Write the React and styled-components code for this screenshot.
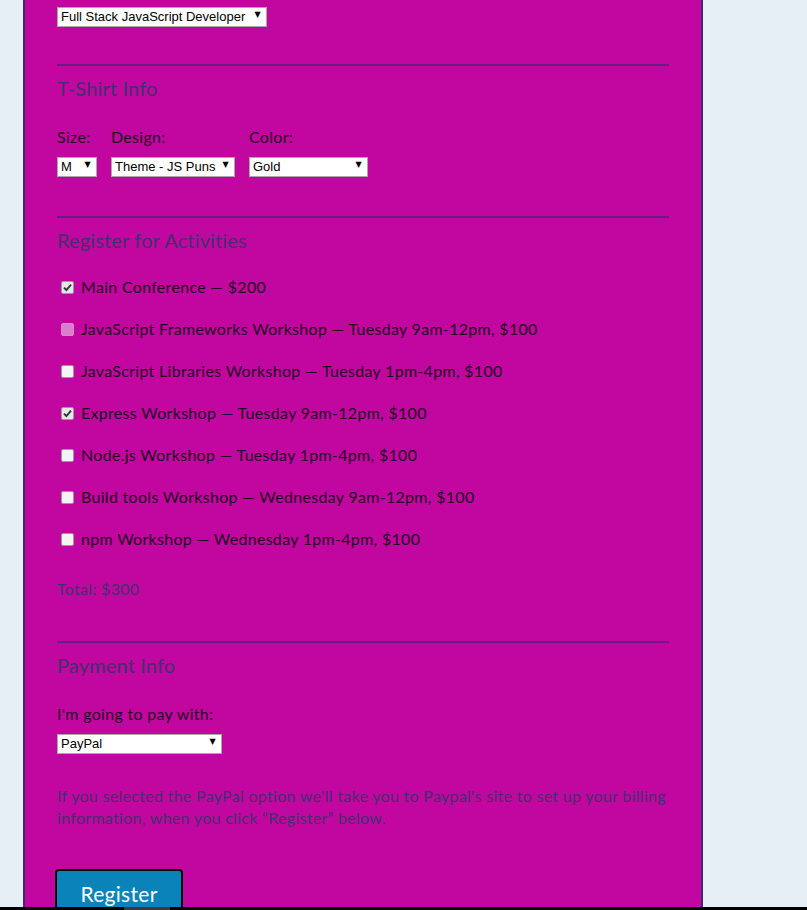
import styled, { createGlobalStyle } from "styled-components";

const GlobalStyle = createGlobalStyle`
    html, body {
        margin: 0;
        padding: 0;
        background: #e6eef6;
        overflow: hidden;
    }
    body {
        font-family: Lato, "Open Sans", sans-serif;
        letter-spacing: 0.3px;
    }
`;

const Panel = styled.form`
    margin-left: 23px;
    width: 612px;
    height: 906px;
    overflow: hidden;
    padding: 5px 32px 0;
    box-sizing: content-box;
    background: #c207a0;
    border-left: 2px solid #3b2a70;
    border-right: 2px solid #3b2a70;
`;

const Rule = styled.hr`
    border: none;
    height: 2px;
    background: #6a1c82;
    margin: ${p => p.$top || 39}px 0 10px;
`;

const Heading = styled.h2`
    margin: 0;
    font-size: 20px;
    line-height: 24px;
    font-weight: 400;
    letter-spacing: 0.15px;
    color: #41306e;
`;

const Label = styled.label`
    display: block;
    font-size: 16px;
    line-height: 20px;
    color: #25061f;
    margin: ${p => p.$top || 0}px 0 8px;
`;

const SelectWrap = styled.div`
    position: relative;
    width: ${p => p.$w}px;
    height: 20px;
`;

const Select = styled.select`
    appearance: none;
    -webkit-appearance: none;
    width: 100%;
    height: 20px;
    box-sizing: border-box;
    margin: 0;
    padding: 0 14px 0 3px;
    border: 1px solid #a9a9a9;
    border-radius: 0;
    background: #fff;
    color: #000;
    font-family: "Liberation Sans", Arial, sans-serif;
    font-size: 13px;
    letter-spacing: 0;
    outline: none;
`;

const Arrow = styled.span`
    position: absolute;
    right: 6px;
    top: 5px;
    font-size: 8px;
    line-height: 10px;
    color: #000;
    font-family: "DejaVu Sans", sans-serif;
    pointer-events: none;
`;

const ShirtRow = styled.div`
    display: flex;
    gap: 14px;
    margin-top: 27px;
`;

const Column = styled.div`
    display: flex;
    flex-direction: column;
`;

const Activities = styled.div`
    display: flex;
    flex-direction: column;
    gap: 22px;
    margin-top: 25px;
`;

const Activity = styled.label`
    display: flex;
    align-items: center;
    font-size: 16px;
    line-height: 20px;
    color: #220020;
`;

const Box = styled.span`
    width: 13px;
    height: 13px;
    box-sizing: border-box;
    margin: 0 7px 0 4px;
    border-radius: 2px;
    border: 1px solid ${p => (p.$disabled ? "#d58bcb" : "#9a9a9a")};
    background: ${p => (p.$disabled ? "#da7fce" : p.$checked ? "#e6e6e6" : "#f4f4f4")};
    display: inline-flex;
    align-items: center;
    justify-content: center;
`;

const Total = styled.p`
    margin: 30px 0 0;
    font-size: 16px;
    line-height: 20px;
    color: #41306e;
`;

const Note = styled.p`
    margin: 33px 0 0;
    font-size: 16px;
    line-height: 22px;
    color: #41306e;
`;

const Button = styled.button`
    display: block;
    margin: 40px 0 0 -2px;
    width: 128px;
    height: 50px;
    padding: 0 0 2px;
    background: #0983b8;
    color: #fff;
    border: 2px solid #000;
    border-radius: 4px;
    font-family: Lato, "Open Sans", sans-serif;
    font-size: 21px;
    letter-spacing: 0.3px;
`;

const ScrollBar = styled.div`
    position: fixed;
    left: 0;
    right: 0;
    bottom: 0;
    height: 3px;
    background: #000;
`;

const Thumb = styled.div`
    margin-left: 124px;
    width: 46px;
    height: 3px;
    background: #3a3a3a;
`;

const activities = [
    { text: "Main Conference — $200", checked: true },
    { text: "JavaScript Frameworks Workshop — Tuesday 9am-12pm, $100", disabled: true },
    { text: "JavaScript Libraries Workshop — Tuesday 1pm-4pm, $100" },
    { text: "Express Workshop — Tuesday 9am-12pm, $100", checked: true },
    { text: "Node.js Workshop — Tuesday 1pm-4pm, $100" },
    { text: "Build tools Workshop — Wednesday 9am-12pm, $100" },
    { text: "npm Workshop — Wednesday 1pm-4pm, $100" },
];

function Dropdown({ width, value }) {
    return (
        <SelectWrap $w={width}>
            <Select defaultValue={value}>
                <option>{value}</option>
            </Select>
            <Arrow>▼</Arrow>
        </SelectWrap>
    );
}

function Check({ checked, disabled }) {
    return (
        <Box $checked={checked} $disabled={disabled}>
            {checked && (
                <svg width="9" height="9" viewBox="0 0 9 9">
                    <path d="M1 4.6 L3.4 7 L8 1.6" fill="none" stroke="#333" strokeWidth="1.9" />
                </svg>
            )}
        </Box>
    );
}

export default function App() {
    return (
        <>
            <GlobalStyle />
            <Panel onSubmit={ev => ev.preventDefault()}>
                <Dropdown width={210} value="Full Stack JavaScript Developer" />

                <Rule />
                <Heading>T-Shirt Info</Heading>
                <ShirtRow>
                    <Column>
                        <Label>Size:</Label>
                        <Dropdown width={40} value="M" />
                    </Column>
                    <Column>
                        <Label>Design:</Label>
                        <Dropdown width={124} value="Theme - JS Puns" />
                    </Column>
                    <Column>
                        <Label>Color:</Label>
                        <Dropdown width={119} value="Gold" />
                    </Column>
                </ShirtRow>

                <Rule $top={41} />
                <Heading>Register for Activities</Heading>
                <Activities>
                    {activities.map(a => (
                        <Activity key={a.text}>
                            <Check checked={a.checked} disabled={a.disabled} />
                            {a.text}
                        </Activity>
                    ))}
                </Activities>
                <Total>Total: $300</Total>

                <Rule $top={42} />
                <Heading>Payment Info</Heading>
                <Label $top={27}>I'm going to pay with:</Label>
                <Dropdown width={165} value="PayPal" />
                <Note>
                    If you selected the PayPal option we'll take you to Paypal's site to set up your billing
                    information, when you click “Register” below.
                </Note>
                <Button type="submit">Register</Button>
            </Panel>
            <ScrollBar>
                <Thumb />
            </ScrollBar>
        </>
    );
}
